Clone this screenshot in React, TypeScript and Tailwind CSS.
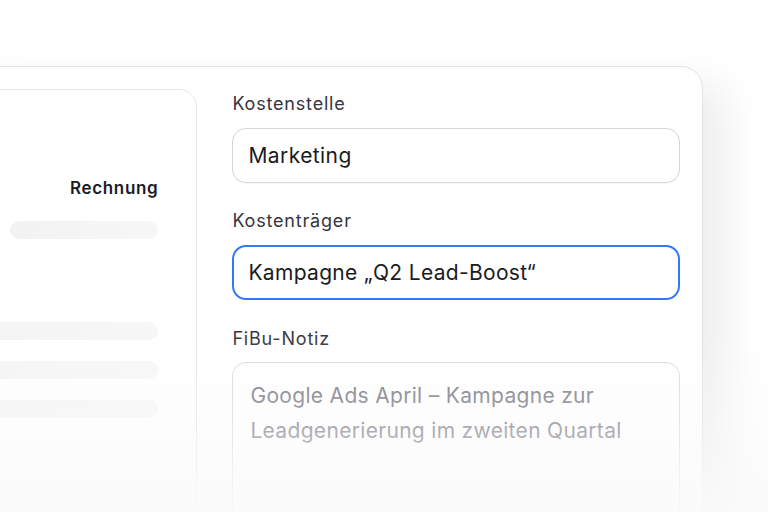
export default function App() {
  return (
    <div className="relative w-[768px] h-[512px] overflow-hidden bg-white font-['Inter',sans-serif]">
      <div className="pt-[66px]">
        <div className="-ml-[40px] w-[743px] h-[520px] rounded-[22px] border border-[#e2e2e6] bg-white shadow-[24px_16px_40px_rgba(0,0,0,0.07)] flex pl-[16px] pr-[22px] pt-[22px]">
          {/* left preview card */}
          <div className="w-[221px] h-[480px] rounded-[18px] border border-[#e6e6ea] pr-[38px] pt-[86px] flex flex-col items-end">
            <p className="text-[17px] leading-[24px] font-semibold tracking-[0.04em] text-[#181c28]">Rechnung</p>
            <div className="mt-[21px] w-[148px] h-[18px] rounded-full bg-gradient-to-r from-[#f2f2f3] to-[#f7f7f8]" />
            <div className="mt-[83px] w-full h-[18px] rounded-full bg-gradient-to-r from-[#f4f4f5] to-[#f7f7f8]" />
            <div className="mt-[21px] w-full h-[18px] rounded-full bg-gradient-to-r from-[#f4f4f5] to-[#f7f7f8]" />
            <div className="mt-[21px] w-full h-[18px] rounded-full bg-gradient-to-r from-[#f4f4f5] to-[#f7f7f8]" />
          </div>

          {/* form */}
          <div className="ml-[35px] w-[449px] flex flex-col">
            <label className="text-[18px] leading-[24px] tracking-[0.045em] text-[#36363e] h-[24px] mt-[3px]">Kostenstelle</label>
            <div className="mt-[12px] h-[55px] rounded-[14px] border border-[#d6d6db] bg-white px-[15px] flex items-center shadow-[0_1px_2px_rgba(0,0,0,0.04)]">
              <span className="text-[21px] tracking-[0.02em] text-[#1b1b22]">Marketing</span>
            </div>
            <label className="mt-[26px] text-[18px] leading-[24px] tracking-[0.045em] text-[#36363e] h-[24px]">Kostenträger</label>
            <div className="mt-[12px] h-[55px] rounded-[14px] border-2 border-[#3478f6] bg-white px-[14px] flex items-center">
              <span className="text-[21px] tracking-[0.015em] text-[#1b1b22]">Kampagne „Q2 Lead-Boost“</span>
            </div>
            <label className="mt-[27px] text-[18px] leading-[24px] tracking-[0.045em] text-[#36363e] h-[24px]">FiBu-Notiz</label>
            <div className="mt-[11px] h-[180px] rounded-[14px] border border-[#d6d6db] bg-white pl-[17px] pr-[16px] pt-[15px]">
              <p className="text-[21px] leading-[35px] tracking-[0.015em] text-[#6e6e78]">
                Google Ads April – Kampagne zur
                <br />
                Leadgenerierung im zweiten Quartal
              </p>
            </div>
          </div>
        </div>
      </div>

      {/* bottom fade */}
      <div className="pointer-events-none absolute left-0 right-0 bottom-0 h-[180px] bg-gradient-to-b from-[rgba(250,250,251,0)] via-[rgba(250,250,251,0.4)] to-[rgba(250,250,251,0.95)]" />
    </div>
  )
}
